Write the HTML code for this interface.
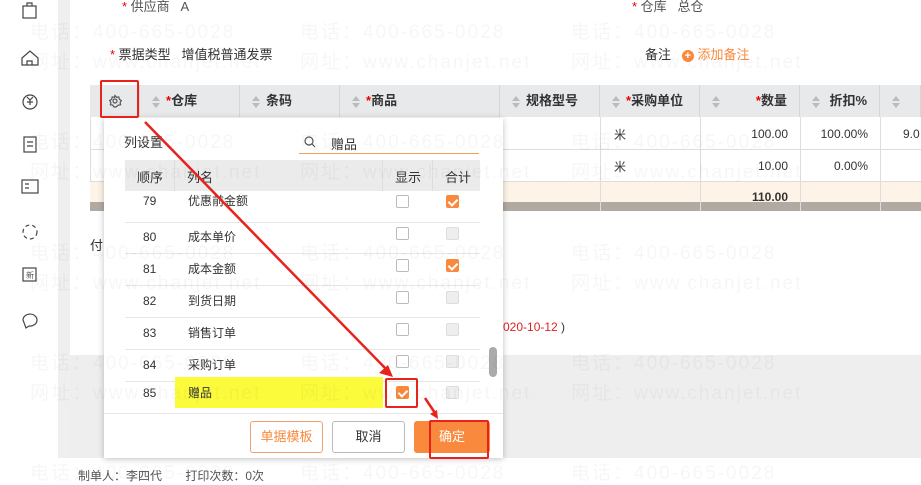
<!DOCTYPE html>
<html><head><meta charset="utf-8"><style>
*{margin:0;padding:0;box-sizing:border-box}
body{width:921px;height:479px;overflow:hidden;position:relative;background:#fff;font-family:"Liberation Sans","Noto Sans CJK SC",sans-serif;font-size:12px;color:#333}
.a{position:absolute}
.wm{position:absolute;color:rgba(0,0,0,0.035);font-size:19px;letter-spacing:2px;white-space:nowrap;z-index:20;pointer-events:none}
.th{position:absolute;top:85px;height:32px;line-height:32px;font-weight:bold;font-size:13px;color:#333;border-right:1px solid #d6d6d6}
.st{color:#e00;font-weight:bold}
.ar{position:relative;display:inline-block;width:8px;height:14px;margin-right:6px;vertical-align:middle}
.ar:before{content:"";position:absolute;left:0;top:1px;border:4px solid transparent;border-bottom:5px solid #bbb;border-top:0}
.ar:after{content:"";position:absolute;left:0;top:8px;border:4px solid transparent;border-top:5px solid #bbb;border-bottom:0}
.td{position:absolute;font-size:12px}
.cb{position:absolute;width:13px;height:13px;border:1px solid #bbb;border-radius:2px;background:#fff}
.cb.g{background:#eee;border-color:#ddd}
.cb.o{background:#f98a3d;border-color:#f98a3d}
.cb.o:after{content:"";position:absolute;left:3px;top:1px;width:4px;height:7px;border:solid #fff;border-width:0 2px 2px 0;transform:rotate(45deg)}
.row{position:absolute;left:125px;width:355px;height:31.7px;border-bottom:1px solid #e6e6e6;font-size:12px}
.row span{position:absolute;top:0;height:20px;line-height:20px}
.red{position:absolute;border:2px solid #e8231c;border-radius:2px}
</style></head><body>
<div class="a" style="left:58px;top:0;width:12px;height:458px;background:#efefef"></div>
<div class="a" style="left:70px;top:355px;width:851px;height:103px;background:#eee"></div>
<svg class="a" style="left:18px;top:0" width="26" height="340" fill="none" stroke="#444" stroke-width="1.2">
<rect x="5" y="6" width="13" height="12"/><path d="M9 6V3h5v3"/>
<path d="M4 58l8-7 8 7v7H4z"/><path d="M9 65v-4h5v4"/>
<circle cx="12" cy="102" r="7"/><path d="M9 97l3 3 3-3M12 100v5M9 102h6"/>
<rect x="6" y="137" width="12" height="15"/><path d="M9 142h6M9 146h6"/>
<rect x="4" y="180" width="16" height="13"/><path d="M7 184h4M7 188h4"/>
<circle cx="12" cy="232" r="7" stroke-dasharray="4 3"/>
<rect x="5" y="268" width="13" height="13"/>
<path d="M5 320a7 6 0 1 1 6 6l-3 2z"/>
</svg>
<div class="a" style="left:26px;top:270px;font-size:8px;color:#555">新</div>
<div class="a" style="left:122px;top:-4px;font-size:13px;color:#555"><span style="color:#e00">*</span> 供应商 &nbsp; A</div>
<div class="a" style="left:632px;top:-4px;font-size:13px;color:#555"><span style="color:#e00">*</span> 仓库 &nbsp; 总仓</div>
<div class="a" style="left:110px;top:44px;font-size:13px"><span style="color:#e00">*</span> 票据类型 &nbsp; 增值税普通发票</div>
<div class="a" style="left:645px;top:44px;font-size:13px">备注 &nbsp; <span style="display:inline-block;width:12px;height:12px;border-radius:6px;background:#f98a3d;color:#fff;font-size:11px;line-height:12px;text-align:center;font-weight:bold">+</span> <span style="color:#f98a3d">添加备注</span></div>
<div class="a" style="left:90px;top:85px;width:831px;height:32px;background:#e8e9eb"></div>
<div class="a" style="left:90px;top:117px;width:831px;height:64px;border-left:1px solid #ddd"></div>
<div class="a" style="left:90px;top:149px;width:831px;height:1px;background:#ddd"></div>
<div class="a" style="left:90px;top:181px;width:831px;height:21px;background:#fdf3e6;border-top:1px solid #ddd"></div>
<div class="a" style="left:90px;top:202px;width:831px;height:9px;background:#b0aaa2"></div>
<div class="th" style="left:90px;width:50px"><svg style="position:absolute;left:18px;top:9px" width="14" height="14" fill="none" stroke="#555" stroke-width="1.2"><path d="M7 1.5l1.5 1.8 2.3-.4.5 2.3 2 1.3-1.2 2 .5 2.3-2.3.3L8 13h-2l-1.3-1.9-2.3-.3.5-2.3-1.2-2 2-1.3.5-2.3 2.3.4z"/><circle cx="7" cy="7" r="2"/></svg></div>
<div class="th" style="left:140px;width:100px;padding-left:12px"><span class="ar"></span><span class="st">*</span>仓库</div>
<div class="th" style="left:240px;width:100px;padding-left:12px"><span class="ar"></span>条码</div>
<div class="th" style="left:340px;width:160px;padding-left:12px"><span class="ar"></span><span class="st">*</span>商品</div>
<div class="th" style="left:500px;width:100px;padding-left:12px"><span class="ar"></span>规格型号</div>
<div class="th" style="left:600px;width:100px;padding-left:12px"><span class="ar"></span><span class="st">*</span>采购单位</div>
<div class="th" style="left:700px;width:100px;padding-left:12px"><span class="ar"></span><span style="position:absolute;right:12px"><span class="st">*</span>数量</span></div>
<div class="th" style="left:800px;width:80px;padding-left:12px"><span class="ar"></span><span style="position:absolute;right:12px">折扣%</span></div>
<div class="th" style="left:880px;width:41px;padding-left:12px"><span class="ar"></span></div>
<div class="a" style="left:600px;top:117px;width:1px;height:94px;background:#ddd"></div>
<div class="a" style="left:700px;top:117px;width:1px;height:94px;background:#ddd"></div>
<div class="a" style="left:800px;top:117px;width:1px;height:94px;background:#ddd"></div>
<div class="a" style="left:880px;top:117px;width:1px;height:94px;background:#ddd"></div>
<div class="td" style="left:614px;top:126px">米</div><div class="td" style="left:614px;top:158px">米</div>
<div class="td" style="left:700px;width:88px;text-align:right;top:127px">100.00</div>
<div class="td" style="left:700px;width:88px;text-align:right;top:159px">10.00</div>
<div class="td" style="left:700px;width:88px;text-align:right;top:190px;font-weight:bold">110.00</div>
<div class="td" style="left:800px;width:68px;text-align:right;top:127px">100.00%</div>
<div class="td" style="left:800px;width:68px;text-align:right;top:159px">0.00%</div>
<div class="td" style="left:903px;top:127px">9.0</div>
<div class="a" style="left:90px;top:235px;font-size:13px">付</div>
<div class="a" style="left:503px;top:320px;font-size:12px;color:#d22">020-10-12 <span style="color:#333">)</span></div>
<div class="a" style="left:78px;top:467px;font-size:12px;color:#555">制单人：李四代 &nbsp; &nbsp; &nbsp; 打印次数：0次</div>
<div class="a" style="left:104px;top:118px;width:399px;height:340px;background:#fff;box-shadow:0 1px 6px rgba(0,0,0,.25)"></div>
<div class="a" style="left:124px;top:132px;font-size:13px">列设置</div>
<svg class="a" style="left:304px;top:136px" width="12" height="12" fill="none" stroke="#555" stroke-width="1.2"><circle cx="5" cy="5" r="4"/><path d="M8 8l3 3"/></svg>
<div class="a" style="left:331px;top:134px;font-size:13px">赠品</div>
<div class="a" style="left:299px;top:153px;width:180px;height:1px;background:#f0a060"></div>
<div class="a" style="left:125px;top:160px;width:355px;height:31px;background:#ebebeb;font-size:13px">
<span class="a" style="left:12px;top:7px">顺序</span><span class="a" style="left:62px;top:7px">列名</span>
<span class="a" style="left:270px;top:7px">显示</span><span class="a" style="left:320px;top:7px">合计</span>
<div class="a" style="left:49px;top:0;width:1px;height:31px;background:#ddd"></div>
<div class="a" style="left:257px;top:0;width:1px;height:31px;background:#ddd"></div>
<div class="a" style="left:307px;top:0;width:1px;height:31px;background:#ddd"></div>
</div>
<div class="row" style="top:191px"><span style="left:18px">79</span><span style="left:63px">优惠前金额</span><div class="cb" style="left:271px;top:4px"></div><div class="cb o" style="left:321px;top:4px"></div></div>
<div class="row" style="top:222px"><span style="left:18px;top:5px">80</span><span style="left:63px;top:5px">成本单价</span><div class="cb" style="left:271px;top:5px"></div><div class="cb g" style="left:321px;top:5px"></div></div>
<div class="row" style="top:254px"><span style="left:18px;top:5px">81</span><span style="left:63px;top:5px">成本金额</span><div class="cb" style="left:271px;top:5px"></div><div class="cb o" style="left:321px;top:5px"></div></div>
<div class="row" style="top:286px"><span style="left:18px;top:5px">82</span><span style="left:63px;top:5px">到货日期</span><div class="cb" style="left:271px;top:5px"></div><div class="cb g" style="left:321px;top:5px"></div></div>
<div class="row" style="top:318px"><span style="left:18px;top:5px">83</span><span style="left:63px;top:5px">销售订单</span><div class="cb" style="left:271px;top:5px"></div><div class="cb g" style="left:321px;top:5px"></div></div>
<div class="row" style="top:350px"><span style="left:18px;top:5px">84</span><span style="left:63px;top:5px">采购订单</span><div class="cb" style="left:271px;top:5px"></div><div class="cb g" style="left:321px;top:5px"></div></div>
<div class="row" style="top:377px;height:31px;border:none"><div class="a" style="left:50px;top:0;width:208px;height:31px;background:#fbfb3c"></div><span style="left:18px;top:6px">85</span><span style="left:63px;top:6px">赠品</span><div class="cb o" style="left:271px;top:9px"></div><div class="cb g" style="left:321px;top:9px"></div></div>
<div class="a" style="left:489px;top:347px;width:8px;height:30px;border-radius:4px;background:#aaa"></div>
<div class="a" style="left:104px;top:413px;width:399px;height:1px;background:#e6e6e6"></div>
<div class="a" style="left:250px;top:421px;width:73px;height:32px;border:1px solid #f0a070;border-radius:3px;color:#f98a3d;text-align:center;line-height:30px;font-size:13px">单据模板</div>
<div class="a" style="left:332px;top:421px;width:73px;height:32px;border:1px solid #bbb;border-radius:3px;text-align:center;line-height:30px;font-size:13px">取消</div>
<div class="a" style="left:414px;top:421px;width:76px;height:32px;background:#f98a3d;border-radius:3px;color:#fff;text-align:center;line-height:32px;font-size:13px">确定</div>
<div class="red" style="left:100px;top:80px;width:39px;height:38px"></div>
<div class="red" style="left:385px;top:378px;width:33px;height:30px"></div>
<div class="red" style="left:429px;top:420px;width:60px;height:39px"></div>
<svg class="a" style="left:0;top:0;z-index:10" width="921" height="479">
<path d="M145 122L387 370" stroke="#e8231c" stroke-width="2.5"/>
<path d="M393 377l-14-4 9-8z" fill="#e8231c"/>
<path d="M425 398L435 413" stroke="#e8231c" stroke-width="2.5"/>
<path d="M438 419l-8-5 7-4z" fill="#e8231c"/>
</svg>
<div class="wm" style="left:30px;top:17px">电话：400-665-0028</div><div class="wm" style="left:30px;top:47px">网址：www.chanjet.net</div>
<div class="wm" style="left:300px;top:17px">电话：400-665-0028</div><div class="wm" style="left:300px;top:47px">网址：www.chanjet.net</div>
<div class="wm" style="left:571px;top:17px">电话：400-665-0028</div><div class="wm" style="left:571px;top:47px">网址：www.chanjet.net</div>
<div class="wm" style="left:30px;top:127px">电话：400-665-0028</div><div class="wm" style="left:30px;top:157px">网址：www.chanjet.net</div>
<div class="wm" style="left:300px;top:127px">电话：400-665-0028</div><div class="wm" style="left:300px;top:157px">网址：www.chanjet.net</div>
<div class="wm" style="left:571px;top:127px">电话：400-665-0028</div><div class="wm" style="left:571px;top:157px">网址：www.chanjet.net</div>
<div class="wm" style="left:30px;top:238px">电话：400-665-0028</div><div class="wm" style="left:30px;top:268px">网址：www.chanjet.net</div>
<div class="wm" style="left:300px;top:238px">电话：400-665-0028</div><div class="wm" style="left:300px;top:268px">网址：www.chanjet.net</div>
<div class="wm" style="left:571px;top:238px">电话：400-665-0028</div><div class="wm" style="left:571px;top:268px">网址：www.chanjet.net</div>
<div class="wm" style="left:30px;top:348px">电话：400-665-0028</div><div class="wm" style="left:30px;top:378px">网址：www.chanjet.net</div>
<div class="wm" style="left:300px;top:348px">电话：400-665-0028</div><div class="wm" style="left:300px;top:378px">网址：www.chanjet.net</div>
<div class="wm" style="left:571px;top:348px">电话：400-665-0028</div><div class="wm" style="left:571px;top:378px">网址：www.chanjet.net</div>
<div class="wm" style="left:30px;top:458px">电话：400-665-0028</div><div class="wm" style="left:300px;top:458px">电话：400-665-0028</div><div class="wm" style="left:571px;top:458px">电话：400-665-0028</div>
</body></html>
